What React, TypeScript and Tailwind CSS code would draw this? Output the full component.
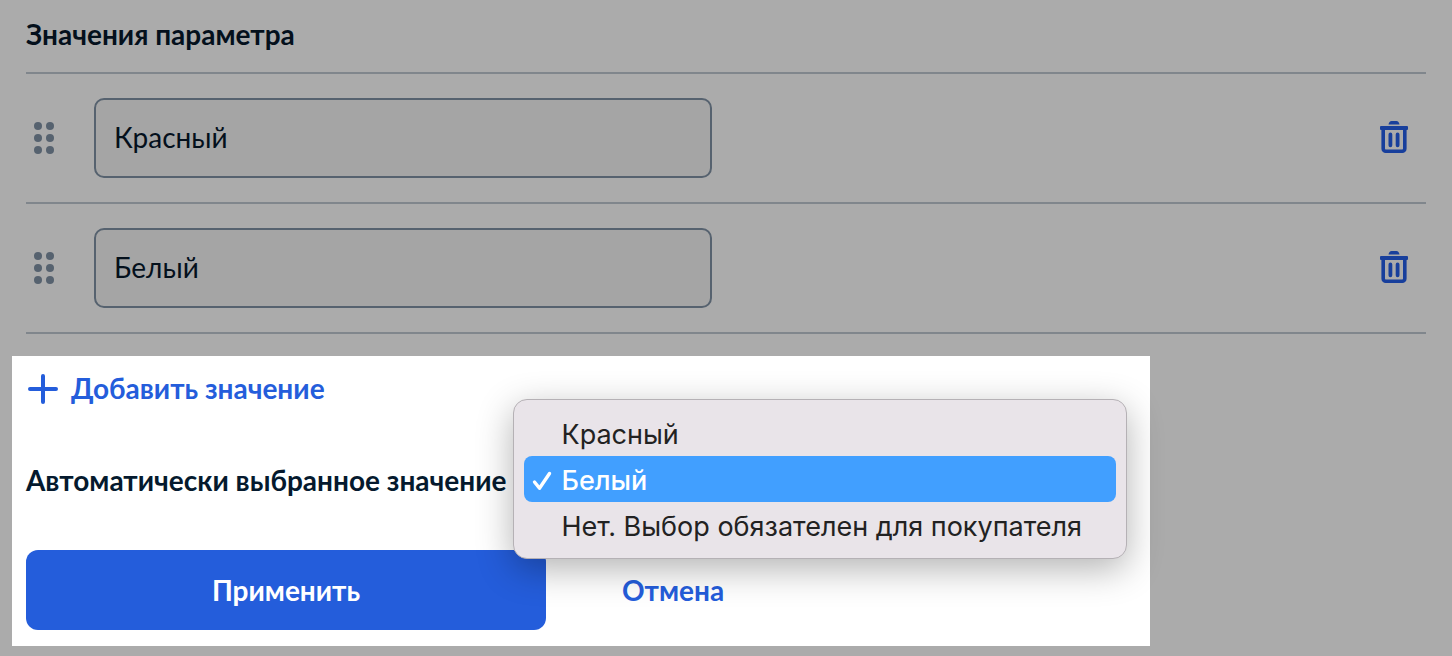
import { useState } from "react";

const OPTIONS = ["Красный", "Белый", "Нет. Выбор обязателен для покупателя"];

function DragDots() {
  return (
    <svg width="20" height="32" viewBox="0 0 20 32" fill="#56626f" aria-hidden="true">
      {[4, 16, 28].map((y) => (
        <g key={y}>
          <circle cx="4" cy={y} r="4" />
          <circle cx="16" cy={y} r="4" />
        </g>
      ))}
    </svg>
  );
}

function TrashIcon() {
  return (
    <svg width="28" height="34" viewBox="0 0 28 34" fill="none" aria-hidden="true">
      <path d="M11.500 0h5c1.600 0 2.600 1.400 3 3.500h-11C8.900 1.400 9.900 0 11.500 0Z" fill="#183f9c" />
      <rect x="0" y="5" width="28" height="4" rx="1" fill="#183f9c" />
      <path d="M3.200 8v19.700a2.500 2.500 0 0 0 2.500 2.500h16.600a2.500 2.500 0 0 0 2.500-2.500V8" stroke="#183f9c" strokeWidth="3.600" />
      <path d="M10.400 13.500v10.800M17.600 13.500v10.800" stroke="#183f9c" strokeWidth="3.800" strokeLinecap="round" />
    </svg>
  );
}

function ValueRow({ name, index }: { name: string; index: number }) {
  return (
    <li className="flex items-center border-b-2 border-[#80868c] py-6 pl-2 pr-[18px]">
      <button type="button" aria-label="Переместить" className="mr-10 shrink-0">
        <DragDots />
      </button>
      <input
        type="text"
        aria-label={`Значение ${index + 1}`}
        defaultValue={name}
        className="h-20 w-full max-w-[618px] rounded-[10px] border-2 border-[#56626f] bg-[#a5a5a5] px-[18px] pb-[2px] text-[28px] text-[#04101c] outline-none"
      />
      <button type="button" aria-label="Удалить" className="ml-auto shrink-0">
        <TrashIcon />
      </button>
    </li>
  );
}

export default function App() {
  const [selected, setSelected] = useState(1);

  return (
    <main className="min-h-screen bg-[#ababab] pb-[10px] font-['Lato','Noto_Sans',sans-serif] text-[28px] leading-10 text-[#04101c]">
      <section className="px-[26px] pt-[14px]">
        <h2 className="border-b-2 border-[#80868c] pb-[18px] font-bold">Значения параметра</h2>
        <ul>
          {["Красный", "Белый"].map((name, i) => (
            <ValueRow key={name} name={name} index={i} />
          ))}
        </ul>
      </section>

      <section className="mx-3 mt-[22px] max-w-[1138px] bg-white px-[14px] pb-4 pt-3">
        <button type="button" className="flex items-center gap-[13px] pl-[2px] font-bold text-[#245ddb]">
          <svg width="30" height="32" viewBox="0 0 30 32" fill="none" stroke="#245ddb" strokeWidth="4" strokeLinecap="round" aria-hidden="true">
            <path d="M15 4v26M2 17h26" />
          </svg>
          Добавить значение
        </button>

        <div className="relative mt-[52px] w-fit">
          <span id="default-value" className="font-bold text-[#051a2e]">
            Автоматически выбранное значение
          </span>
          <div
            role="listbox"
            aria-labelledby="default-value"
            className="absolute -top-[61px] left-full z-10 ml-[6px] w-[614px] rounded-[14px] border border-[#b5b1b5] bg-[#e9e4e9] p-[10px] font-['Inter',sans-serif] text-[#222222] shadow-[0_10px_36px_rgba(0,0,0,0.3)]"
          >
            {OPTIONS.map((option, i) => (
              <button
                key={option}
                type="button"
                role="option"
                aria-selected={selected === i}
                onClick={() => setSelected(i)}
                className={
                  selected === i
                    ? "flex h-[46px] w-full items-center whitespace-nowrap rounded-lg bg-[#419fff] pl-2 pt-1 text-[27px] font-medium text-white"
                    : "flex h-[46px] w-full items-center whitespace-nowrap rounded-lg pl-2 pt-1 text-[27px]"
                }
              >
                <span className="w-[30px] shrink-0">
                  {selected === i && (
                    <svg width="20" height="20" viewBox="0 0 20 20" fill="none" stroke="currentColor" strokeWidth="3.400" strokeLinecap="round" strokeLinejoin="round" aria-hidden="true">
                      <path d="M2.500 11l5 6.300L17.500 2.500" />
                    </svg>
                  )}
                </span>
                {option}
              </button>
            ))}
          </div>
        </div>

        <div className="mt-[50px] flex items-center">
          <button type="button" className="h-20 w-[520px] rounded-xl bg-[#245ddb] font-bold text-white">
            Применить
          </button>
          <button type="button" className="ml-[76px] font-bold text-[#245ddb]">
            Отмена
          </button>
        </div>
      </section>
    </main>
  );
}
